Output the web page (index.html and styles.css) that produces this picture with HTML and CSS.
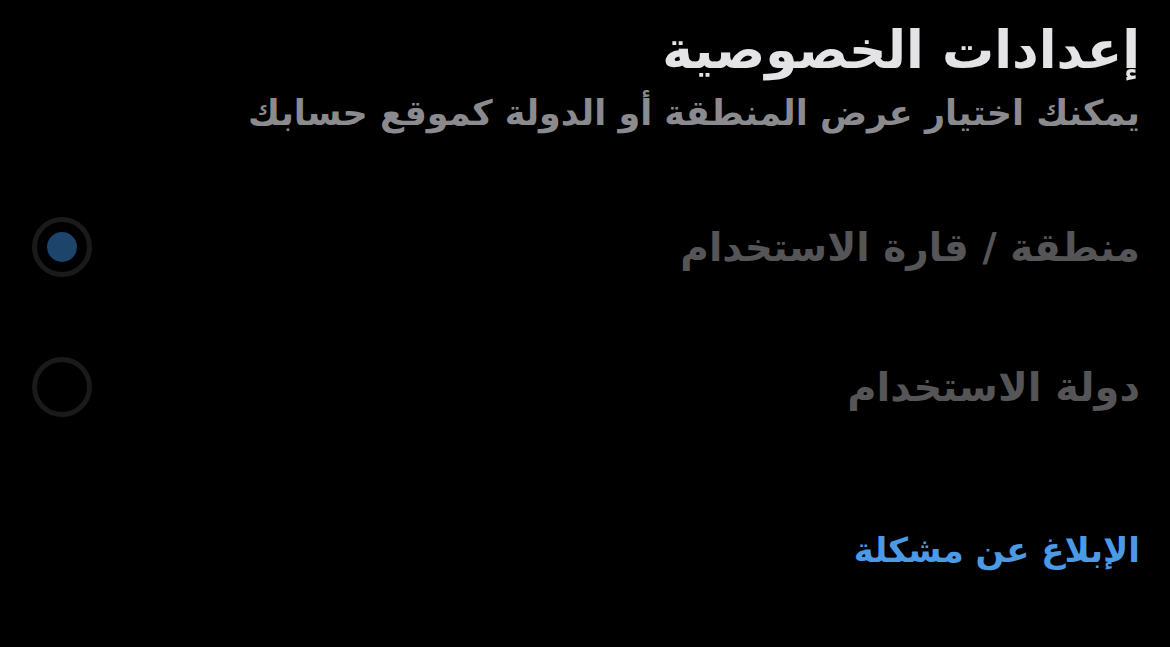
FILE: index.html
```html
<!DOCTYPE html>
<html lang="ar" dir="rtl">
<head>
<meta charset="utf-8">
<link rel="stylesheet" href="styles.css">
</head>
<body>
<main class="page">
  <header class="head">
    <h1 class="title">إعدادات الخصوصية</h1>
    <p class="subtitle">يمكنك اختيار عرض المنطقة أو الدولة كموقع حسابك</p>
  </header>
  <section class="options">
    <div class="option">
      <span class="label label-a">منطقة / قارة الاستخدام</span>
      <span class="radio checked"><span class="dot"></span></span>
    </div>
    <div class="option">
      <span class="label label-b">دولة الاستخدام</span>
      <span class="radio"></span>
    </div>
  </section>
  <a class="report" href="#">الإبلاغ عن مشكلة</a>
</main>
</body>
</html>
```
FILE: styles.css
```css
html, body {
  margin: 0;
  padding: 0;
  background: #000;
  height: 100%;
}
body {
  font-family: "DejaVu Sans", "Noto Sans", sans-serif;
  overflow: hidden;
}
.page {
  display: flex;
  flex-direction: column;
  padding: 18px 30px 0 32px;
}
.head {
  display: flex;
  flex-direction: column;
}
.title {
  margin: 0;
  font-size: 52px;
  font-weight: 700;
  color: #e4e4e6;
  line-height: 64px;
}
.subtitle {
  margin: 6px 0 0;
  font-size: 35px;
  font-weight: 700;
  color: #8b8b8f;
  line-height: 50px;
}
.options {
  display: flex;
  flex-direction: column;
  gap: 80px;
  margin-top: 79px;
}
.option {
  display: flex;
  align-items: center;
  justify-content: space-between;
  height: 60px;
}
.label {
  font-weight: 700;
  color: #555557;
}
.label-a {
  font-size: 39px;
}
.label-b {
  font-size: 40px;
}
.radio {
  box-sizing: border-box;
  width: 60px;
  height: 60px;
  border-radius: 50%;
  border: 5px solid #1a1a1b;
  display: flex;
  align-items: center;
  justify-content: center;
}
.dot {
  width: 30px;
  height: 30px;
  border-radius: 50%;
  background: #1d456c;
}
.report {
  margin-top: 113px;
  font-size: 34px;
  font-weight: 700;
  color: #4a9ae6;
  text-decoration: none;
  align-self: flex-start;
}
```
